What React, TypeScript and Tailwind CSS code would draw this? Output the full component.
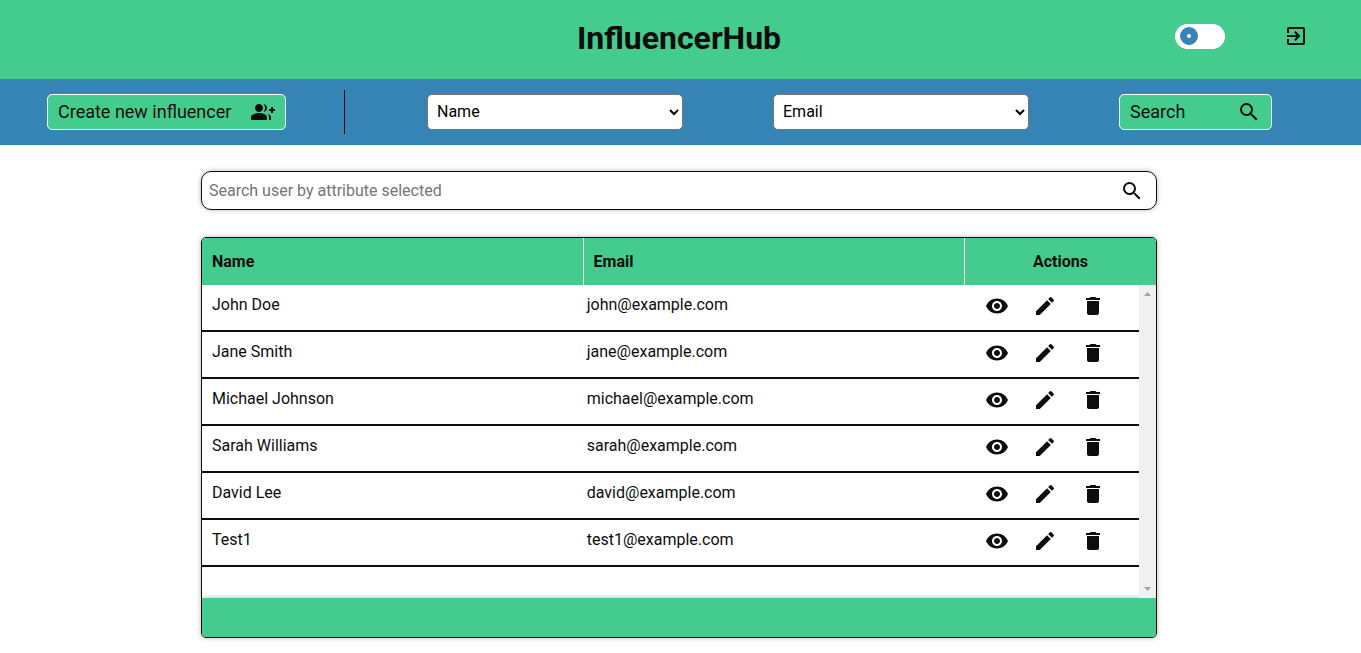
import { useState, type ReactNode } from "react";
import {
  MdDelete,
  MdEdit,
  MdExitToApp,
  MdGroupAdd,
  MdSearch,
  MdVisibility,
} from "react-icons/md";

type Influencer = { name: string; email: string };

const influencers: Influencer[] = [
  { name: "John Doe", email: "john@example.com" },
  { name: "Jane Smith", email: "jane@example.com" },
  { name: "Michael Johnson", email: "michael@example.com" },
  { name: "Sarah Williams", email: "sarah@example.com" },
  { name: "David Lee", email: "david@example.com" },
  { name: "Test1", email: "test1@example.com" },
];

function Header() {
  const [dark, setDark] = useState(false);
  return (
    <header className="grid h-[79px] grid-cols-[1fr_auto_1fr] items-center bg-[#43cc8e] pr-[3px]">
      <h1 className="col-start-2 pb-1 text-[32px] leading-10 font-bold">InfluencerHub</h1>
      <div className="flex items-center justify-end gap-[59px] pr-[50px] pb-[7px]">
        <label className="flex h-[25px] w-[50px] cursor-pointer items-center rounded-full bg-white px-[5px]">
          <input
            type="checkbox"
            role="switch"
            aria-label="Dark mode"
            checked={dark}
            onChange={(e) => setDark(e.target.checked)}
            className="size-[18px] appearance-none rounded-full border-[7px] border-[#3684b6] bg-white checked:ml-auto"
          />
        </label>
        <button type="button" aria-label="Log out">
          <MdExitToApp className="size-6" />
        </button>
      </div>
    </header>
  );
}

function AttributeSelect({ label, initial }: { label: string; initial: string }) {
  return (
    <select
      aria-label={label}
      defaultValue={initial}
      className="h-9 w-64 rounded-[5px] border border-[#767676] bg-white px-[5px] pb-0.5 text-base text-black"
    >
      <option>Name</option>
      <option>Email</option>
    </select>
  );
}

function Toolbar() {
  return (
    <div className="flex h-[66px] items-center bg-[#3684b6]">
      <div className="flex h-11 w-[345px] shrink-0 items-center border-r border-[#0d0d0d] pl-[47px]">
        <button
          type="button"
          className="flex h-9 w-[239px] items-center justify-between rounded-[5px] border border-white bg-[#43cc8e] px-2.5 text-lg"
        >
          Create new influencer
          <MdGroupAdd className="size-6" />
        </button>
      </div>
      <div className="flex flex-1 items-center justify-between pr-[89px] pl-[82px]">
        <AttributeSelect label="First attribute" initial="Name" />
        <AttributeSelect label="Second attribute" initial="Email" />
        <button
          type="button"
          className="flex h-9 w-[153px] items-center justify-between rounded-[5px] border border-white bg-[#43cc8e] px-2.5 text-lg"
        >
          Search
          <MdSearch className="size-6" />
        </button>
      </div>
    </div>
  );
}

function SearchBox() {
  return (
    <form
      className="flex h-[39px] items-center rounded-[10px] border border-[#0d0d0d] pr-3 pl-[7px] shadow-[0_0_5px_rgba(0,0,0,0.3)]"
      onSubmit={(e) => e.preventDefault()}
    >
      <input
        type="text"
        aria-label="Search user"
        placeholder="Search user by attribute selected"
        className="min-w-0 flex-1 bg-transparent text-base outline-none placeholder:text-[#757575]"
      />
      <button type="submit" aria-label="Search user">
        <MdSearch className="size-6" />
      </button>
    </form>
  );
}

function ActionButton({ label, children }: { label: string; children: ReactNode }) {
  return (
    <button type="button" aria-label={label} className="text-2xl">
      {children}
    </button>
  );
}

function ScrollTrack() {
  return (
    <div aria-hidden="true" className="flex w-[17px] flex-col items-center justify-between bg-[#f0f0f0] py-[7px]">
      <svg width="7" height="4" viewBox="0 0 7 4" fill="#a3a3a3">
        <path d="M3.5 0 7 4H0z" />
      </svg>
      <svg width="7" height="4" viewBox="0 0 7 4" fill="#a3a3a3">
        <path d="M0 0h7L3.5 4z" />
      </svg>
    </div>
  );
}

function InfluencerTable() {
  return (
    <section className="overflow-hidden rounded-[5px] border border-[#0d0d0d] shadow-[0_0_5px_rgba(0,0,0,0.3)]">
      <table className="w-full table-fixed border-separate border-spacing-0 bg-[#43cc8e]">
        <thead>
          <tr className="h-[47px] text-left">
            <th className="w-2/5 border-r border-white px-2.5 font-bold">Name</th>
            <th className="w-2/5 border-r border-white px-2.5 font-bold">Email</th>
            <th className="w-1/5 text-center font-bold">Actions</th>
          </tr>
        </thead>
      </table>
      <div className="flex min-h-[313px]">
        <div className="flex-1">
          <table aria-label="Influencers" className="w-full table-fixed border-separate border-spacing-0">
            <tbody>
              {influencers.map(({ name, email }) => (
                <tr key={email} className="h-[47px]">
                  <td className="w-2/5 border-b-2 border-[#0d0d0d] px-2.5 pb-1.5">{name}</td>
                  <td className="w-2/5 border-b-2 border-[#0d0d0d] px-2.5 pb-1.5">{email}</td>
                  <td className="w-1/5 border-b-2 border-[#0d0d0d]">
                    <div className="flex items-center justify-center gap-6 pb-1">
                      <ActionButton label={`View ${name}`}>
                        <MdVisibility />
                      </ActionButton>
                      <ActionButton label={`Edit ${name}`}>
                        <MdEdit />
                      </ActionButton>
                      <ActionButton label={`Delete ${name}`}>
                        <MdDelete />
                      </ActionButton>
                    </div>
                  </td>
                </tr>
              ))}
            </tbody>
          </table>
        </div>
        <ScrollTrack />
      </div>
      <div className="h-[39px] bg-[#43cc8e] shadow-[0_0_5px_rgba(0,0,0,0.3)]" />
    </section>
  );
}

export default function App() {
  return (
    <div className="min-h-screen bg-white font-[Roboto,sans-serif] text-base text-[#0d0d0d]">
      <Header />
      <Toolbar />
      <main className="flex flex-col gap-[27px] pt-[26px] pr-[15%] pl-[201px]">
        <SearchBox />
        <InfluencerTable />
      </main>
    </div>
  );
}
